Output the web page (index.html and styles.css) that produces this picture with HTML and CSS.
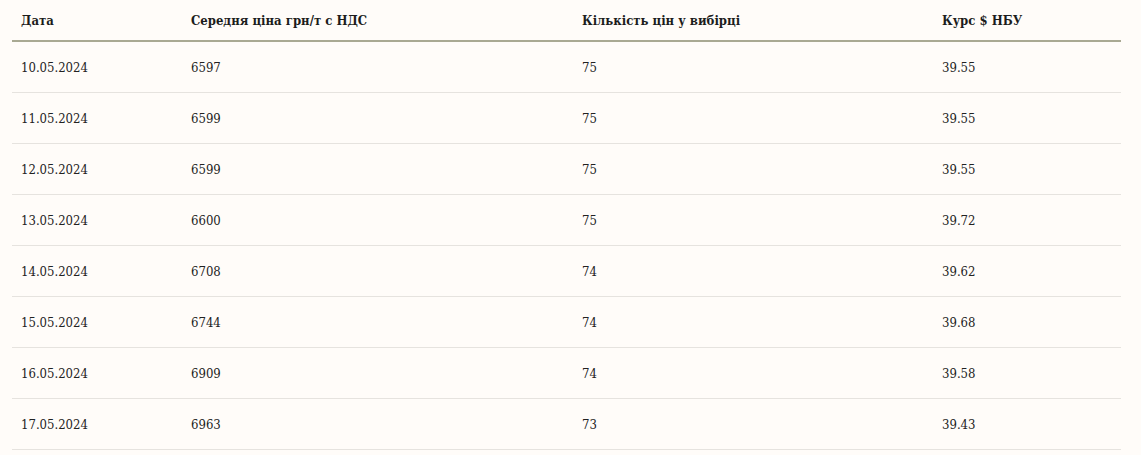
FILE: index.html
```html
<!DOCTYPE html>
<html lang="uk">
<head>
<meta charset="utf-8">
<title>Ціни</title>
<link rel="stylesheet" href="styles.css">
</head>
<body>
<table class="prices">
  <colgroup>
    <col class="c1"><col class="c2"><col class="c3"><col class="c4">
  </colgroup>
  <thead>
    <tr><th>Дата</th><th>Середня ціна грн/т с НДС</th><th>Кількість цін у вибірці</th><th>Курс $ НБУ</th></tr>
  </thead>
  <tbody>
    <tr><td>10.05.2024</td><td>6597</td><td>75</td><td>39.55</td></tr>
    <tr><td>11.05.2024</td><td>6599</td><td>75</td><td>39.55</td></tr>
    <tr><td>12.05.2024</td><td>6599</td><td>75</td><td>39.55</td></tr>
    <tr><td>13.05.2024</td><td>6600</td><td>75</td><td>39.72</td></tr>
    <tr><td>14.05.2024</td><td>6708</td><td>74</td><td>39.62</td></tr>
    <tr><td>15.05.2024</td><td>6744</td><td>74</td><td>39.68</td></tr>
    <tr><td>16.05.2024</td><td>6909</td><td>74</td><td>39.58</td></tr>
    <tr><td>17.05.2024</td><td>6963</td><td>73</td><td>39.43</td></tr>
  </tbody>
</table>
</body>
</html>
```
FILE: styles.css
```css
html, body {
  margin: 0;
  background: #fffcf9;
}
body {
  padding: 0 20px 0 12px;
  font-family: "DejaVu Serif Condensed", "DejaVu Serif", serif;
  font-size: 13px;
  color: #222;
}
.prices {
  width: 1109px;
  border-collapse: collapse;
  table-layout: fixed;
}
.c1 { width: 170px; }
.c2 { width: 391px; }
.c3 { width: 360px; }
.c4 { width: 188px; }
.prices th {
  height: 40px;
  padding: 0 9px;
  text-align: left;
  font-weight: bold;
  color: #1c1c1c;
  border-bottom: 2px solid #a9a993;
  vertical-align: middle;
  line-height: 1;
}
.prices td {
  height: 50px;
  padding: 0 9px;
  border-bottom: 1px solid #e6e3df;
  vertical-align: middle;
  line-height: 1;
}
```
